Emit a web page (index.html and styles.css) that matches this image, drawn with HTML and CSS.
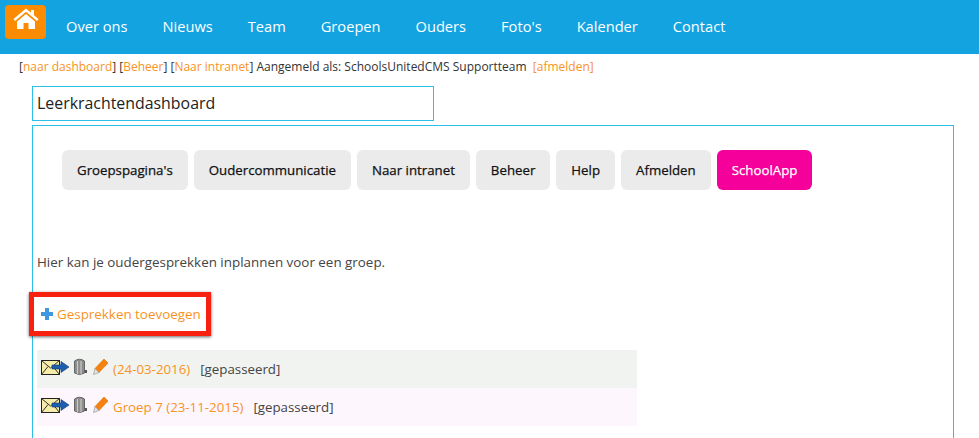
FILE: index.html
```html
<!DOCTYPE html>
<html lang="nl">

<head>
    <meta charset="UTF-8">
    <title>Leerkrachtendashboard</title>
    <link rel="stylesheet" href="styles.css">
</head>

<body>
    <!-- Top navigation -->
    <header class="topbar">
        <a class="home-btn" href="#">
            <svg width="26" height="22" viewBox="0 0 26 22">
                <path d="M13 .5 L.5 11 L2 13 L13 3.800 L24 13 L25.500 11 L21 7.200 V2 H18 V4.700 Z" fill="#fff" />
                <path d="M13 6 L4 13.500 V21 H10.500 V15 H15.500 V21 H22 V13.500 Z" fill="#fff" />
            </svg>
        </a>
        <nav class="nav">
            <a href="#">Over ons</a>
            <a href="#">Nieuws</a>
            <a href="#">Team</a>
            <a href="#">Groepen</a>
            <a href="#">Ouders</a>
            <a href="#">Foto's</a>
            <a href="#">Kalender</a>
            <a href="#">Contact</a>
        </nav>
    </header>

    <p class="adminbar">
        [<a href="#">naar dashboard</a>] [<a href="#">Beheer</a>] [<a href="#">Naar intranet</a>] Aangemeld als: SchoolsUnitedCMS Supportteam&nbsp; <a href="#">[afmelden]</a>
    </p>

    <main class="content">
        <h1 class="page-title">Leerkrachtendashboard</h1>

        <div class="panel">
            <div class="tabs">
                <a class="tab" href="#">Groepspagina's</a>
                <a class="tab" href="#">Oudercommunicatie</a>
                <a class="tab" href="#">Naar intranet</a>
                <a class="tab" href="#">Beheer</a>
                <a class="tab" href="#">Help</a>
                <a class="tab" href="#">Afmelden</a>
                <a class="tab tab-app" href="#">SchoolApp</a>
            </div>

            <p class="intro">Hier kan je oudergesprekken inplannen voor een groep.</p>

            <div class="highlight">
                <svg width="12" height="12" viewBox="0 0 12 12">
                    <path d="M4 0 H8 V4 H12 V8 H8 V12 H4 V8 H0 V4 H4 Z" fill="#3f97e0" />
                </svg>
                <a href="#">Gesprekken toevoegen</a>
            </div>

            <div class="row row-grey">
                <span class="icons">
                    <svg width="30" height="18" viewBox="0 0 30 18">
                        <rect x="1.500" y="2.500" width="18" height="14" fill="#f5eda8" stroke="#222" />
                        <path d="M1.500 2.500 L10.500 10 L19.500 2.500 M1.500 16.500 L8 8.500 M19.500 16.500 L13 8.500" fill="none" stroke="#333" />
                        <path d="M12 7 H21 V3.500 L29 9 L21 14.500 V11 H12 Z" fill="#1c5fae" stroke="#123a70" stroke-width=".6" />
                    </svg>
                    <svg width="16" height="18" viewBox="0 0 16 18">
                        <path d="M1.500 3 Q6.500 -.5 11.500 3 V15 Q6.500 18 1.500 15 Z" fill="#8c8c8c" stroke="#666" />
                        <path d="M4.500 3 V16 M8 3 V16" stroke="#c8c8c8" stroke-width="1.200" />
                        <path d="M12 12 H14 V15 H12 Z" fill="#555" />
                    </svg>
                    <svg width="16" height="18" viewBox="0 0 16 18">
                        <path d="M12 1 L16 5 L7 14.500 L3 10.500 Z" fill="#f5820f" stroke="#e06f00" stroke-width=".6" />
                        <path d="M3 10.500 L7 14.500 L1.500 16.500 Z" fill="#e4e4e4" stroke="#888" stroke-width=".6" />
                    </svg>
                </span>
                <a href="#">(24-03-2016)</a>
                <span class="status">[gepasseerd]</span>
            </div>

            <div class="row row-pink">
                <span class="icons">
                    <svg width="30" height="18" viewBox="0 0 30 18">
                        <rect x="1.500" y="2.500" width="18" height="14" fill="#f5eda8" stroke="#222" />
                        <path d="M1.500 2.500 L10.500 10 L19.500 2.500 M1.500 16.500 L8 8.500 M19.500 16.500 L13 8.500" fill="none" stroke="#333" />
                        <path d="M12 7 H21 V3.500 L29 9 L21 14.500 V11 H12 Z" fill="#1c5fae" stroke="#123a70" stroke-width=".6" />
                    </svg>
                    <svg width="16" height="18" viewBox="0 0 16 18">
                        <path d="M1.500 3 Q6.500 -.5 11.500 3 V15 Q6.500 18 1.500 15 Z" fill="#8c8c8c" stroke="#666" />
                        <path d="M4.500 3 V16 M8 3 V16" stroke="#c8c8c8" stroke-width="1.200" />
                        <path d="M12 12 H14 V15 H12 Z" fill="#555" />
                    </svg>
                    <svg width="16" height="18" viewBox="0 0 16 18">
                        <path d="M12 1 L16 5 L7 14.500 L3 10.500 Z" fill="#f5820f" stroke="#e06f00" stroke-width=".6" />
                        <path d="M3 10.500 L7 14.500 L1.500 16.500 Z" fill="#e4e4e4" stroke="#888" stroke-width=".6" />
                    </svg>
                </span>
                <a href="#">Groep 7 (23-11-2015)</a>
                <span class="status">[gepasseerd]</span>
            </div>
        </div>
    </main>
</body>

</html>
```

FILE: styles.css
```css
html,
body {
    height: 438px;
    overflow: hidden;
}

body {
    font-family: "Open Sans", sans-serif;
    color: #444;
    background-color: #fff;
    margin: 0;
    padding: 0;
}

a {
    color: #f7931e;
    text-decoration: none;
}

.topbar {
    display: flex;
    height: 54px;
    padding: 5px 0 0 5px;
    box-sizing: border-box;
    background-color: #13a3e1;
}

.home-btn {
    display: flex;
    justify-content: center;
    width: 41px;
    height: 34px;
    padding-top: 3px;
    box-sizing: border-box;
    border-radius: 4px;
    background-color: #fb8b00;
}

.nav {
    display: flex;
    gap: 35px;
    margin-left: 20px;
    line-height: 43px;
    font-size: 14.65px;
}

.nav a {
    color: #fff;
}

.adminbar {
    margin: 0;
    padding: 4px 0 0 19px;
    height: 32px;
    box-sizing: border-box;
    font-size: 12px;
    line-height: 18px;
    color: #333;
}

.content {
    margin-left: 32px;
    width: 922px;
}

.page-title {
    margin: 0;
    width: 402px;
    height: 35px;
    padding-left: 4px;
    box-sizing: border-box;
    border: 1px solid #2cc0e6;
    font-size: 15.9px;
    font-weight: 400;
    line-height: 32px;
    color: #222;
}

.panel {
    margin-top: 4px;
    height: 330px;
    padding: 24px 0 0 4px;
    box-sizing: border-box;
    border: 1px solid #2cc0e6;
}

.tabs {
    display: flex;
    gap: 6px;
    margin-left: 25px;
}

.tab {
    height: 40px;
    padding: 0 15px;
    border-radius: 6px;
    background-color: #ebebeb;
    color: #111;
    font-size: 13.28px;
    -webkit-text-stroke: 0.25px;
    line-height: 40px;
}

.tab-app {
    background-color: #f5009b;
    color: #fff;
}

.intro {
    margin: 62px 0 0;
    font-size: 13.4px;
    line-height: 20px;
}

.highlight {
    display: flex;
    align-items: center;
    gap: 4px;
    width: 182px;
    height: 44px;
    margin: 20px 0 14px -8px;
    padding-left: 7px;
    box-sizing: border-box;
    border: 5px solid #f8200e;
    box-shadow: 0 1px 3px rgba(0, 0, 0, 0.6);
    font-size: 13.4px;
    white-space: nowrap;
}

.row {
    display: flex;
    align-items: center;
    width: 600px;
    height: 38px;
    padding-left: 3px;
    box-sizing: border-box;
    font-size: 13.3px;
}

.row-grey {
    background-color: #f1f3f0;
}

.row-pink {
    background-color: #fdf6fd;
}

.icons {
    display: flex;
    gap: 3px;
    margin-right: 5px;
    margin-top: -5px;
}

.status {
    margin-left: 10px;
}
```
